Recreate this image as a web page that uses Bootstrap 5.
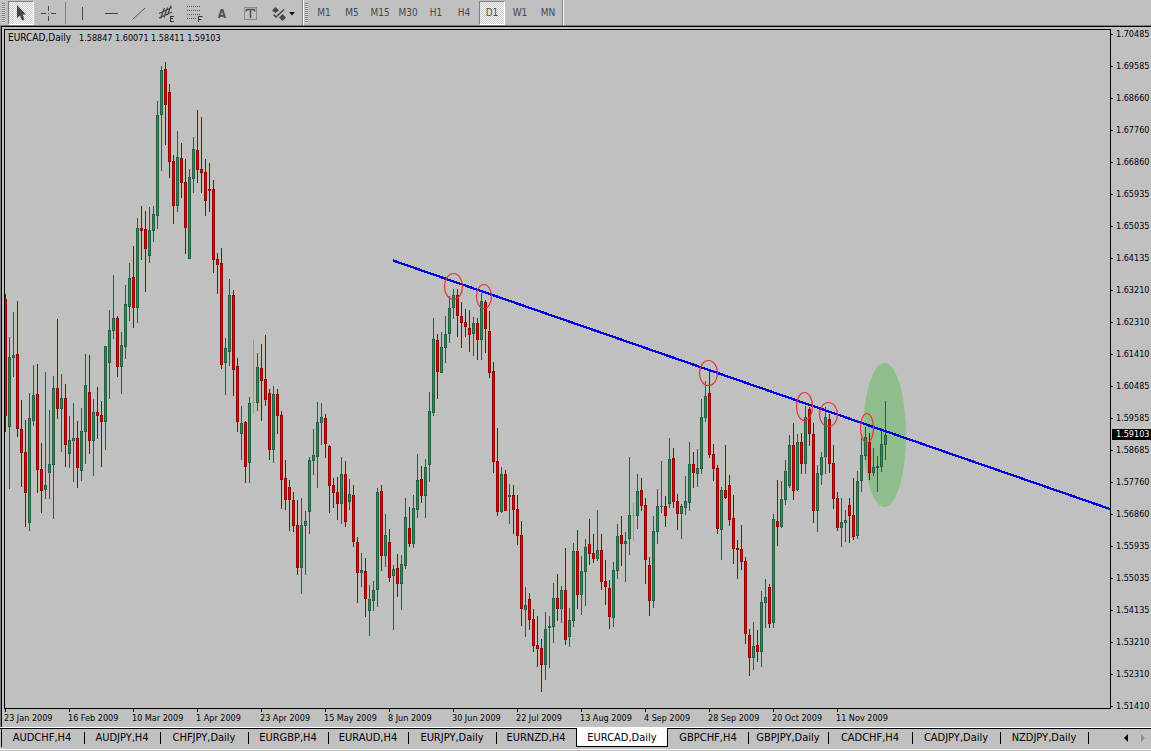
<!DOCTYPE html>
<html lang="en">
<head>
<meta charset="utf-8">
<meta name="viewport" content="width=device-width, initial-scale=1">
<title>EURCAD,Daily</title>
<link href="https://cdn.jsdelivr.net/npm/bootstrap@5.3.0/dist/css/bootstrap.min.css" rel="stylesheet">
<style>
  :root { --face: #c0c0c0; --shade: #808080; --ink: #000; }
  body {
    background: var(--face); color: var(--ink);
    font-family: "DejaVu Sans Condensed", "DejaVu Sans", sans-serif;
    font-size: 11px; line-height: 12px;
  }
  /* toolbar */
  .toolstrip { height: 26px; border-bottom: 1px solid var(--shade); }
  .toolgroup { height: 25px; border-right: 1px solid var(--shade); box-shadow: 1px 0 0 #fff; }
  .grip { width: 3px; height: 20px; margin: 0 2px; background: repeating-linear-gradient(#808080 0 1px, #d8d8d8 1px 2px); }
  .tool {
    --bs-btn-padding-x: 0; --bs-btn-padding-y: 0; --bs-btn-border-radius: 0;
    --bs-btn-color: #484848; --bs-btn-font-size: 10px; --bs-btn-line-height: 12px;
    width: 28px; height: 24px; border: 0;
  }
  .tool svg { display: block; margin: auto; }
  .tool-down {
    width: 26px; margin: 0 1px; border: 1px solid; border-color: #808080 #fff #fff #808080;
    background: repeating-conic-gradient(#fff 0 25%, #c8c8c8 0 50%) 0 0 / 2px 2px;
  }
  .tool-wide { width: 38px; }
  .rule { width: 1px; height: 22px; margin: 0 2px; background: var(--shade); }
  /* chart window */
  .chartwin {
    margin-left: 1px; padding: 2px 0 0 2px; min-height: 0;
    border-top: 1px solid var(--ink); border-left: 1px solid var(--ink);
    box-shadow: -1px 0 0 var(--shade);
    display: grid; grid-template: minmax(0, 1fr) 18px / minmax(0, 1fr) 40px;
  }
  .plot { border: 1px solid var(--ink); min-height: 0; }
  .plot svg { display: block; width: 100%; height: 100%; }
  .quote { top: 2px; left: 3px; font-size: 9px; gap: 8px; }
  .quote-name { font-size: 10px; }
  .prices { grid-column: 2; grid-row: 1 / 3; margin-top: -1px; padding-bottom: 15px; font-size: 9px; }
  .prices li { padding-left: 5px; }
  .prices li::before { content: ""; position: absolute; left: 0; top: 6px; width: 2px; height: 1px; background: var(--ink); }
  .prices .price-now { top: 57.4%; left: 1px; right: 0; padding-left: 4px; height: 11px; line-height: 11px; background: #000; color: #fff; }
  .dates { font-size: 9px; overflow: hidden; }
  .dates li { flex: 0 0 64px; padding-top: 3px; white-space: nowrap; }
  .dates li::before { content: ""; position: absolute; left: 1px; top: 0; width: 1px; height: 3px; background: var(--ink); }
  /* chart tabs */
  .tabstrip { height: 24px; border-top: 1px solid #fff; }
  .tabrow { height: 22px; border-top: 1px solid var(--ink); border-bottom: 1px solid #fff; }
  .tabrow::before { content: ""; width: 1px; height: 18px; margin: 0 -2px 0 1px; background: var(--ink); }
  .charttab { flex: 0 0 80px; height: 18px; color: #000; text-align: center; line-height: 18px; text-decoration: none; white-space: nowrap; position: relative; }
  .charttab::after { content: ""; position: absolute; right: -1px; top: 3px; width: 1px; height: 12px; background: var(--ink); }
  .t76 { flex-basis: 76px; }
  .t84 { flex-basis: 84px; }
  .t88 { flex-basis: 88px; }
  .t92 { flex-basis: 92px; }
  .before-open::after { display: none; }
  .open-tab { height: 19px; margin-top: -1px; background: #fff; border: 1px solid #000; border-top: 0; line-height: 20px; }
  .open-tab::after { display: none; }
  .scroller { border: 0; background: none; padding: 0; width: 17px; height: 18px; }
  .scroller svg { display: block; margin: auto; }
</style>
</head>
<body class="vh-100 d-flex flex-column overflow-hidden">
<header class="toolstrip d-flex flex-shrink-0" role="toolbar" aria-label="Chart tools">
  <div class="toolgroup d-flex align-items-center">
    <span class="grip"></span>
    <button class="btn tool tool-down" type="button" aria-label="Cursor"><svg width="16" height="18"><path d="M4 1V14L7 11.500L9 16.500L11.500 15.500L9.500 10.500H13Z" fill="#444"/></svg></button>
    <button class="btn tool" type="button" aria-label="Crosshair"><svg width="16" height="18" shape-rendering="crispEdges"><path d="M7 2v5h1V2zM7 12v5h1v-5zM0 9v1h5V9zM10 9v1h5V9zM7 9v1h1V9z" fill="#444"/></svg></button>
    <span class="rule"></span>
    <button class="btn tool" type="button" aria-label="Vertical line"><svg width="16" height="18" shape-rendering="crispEdges"><path d="M8 3h1v13h-1z" fill="#444"/></svg></button>
    <button class="btn tool" type="button" aria-label="Horizontal line"><svg width="16" height="18" shape-rendering="crispEdges"><path d="M3 9h13v1H3z" fill="#444"/></svg></button>
    <button class="btn tool" type="button" aria-label="Trendline"><svg width="16" height="18"><path d="M2.500 15.500L15 4" stroke="#555" fill="none"/></svg></button>
    <button class="btn tool" type="button" aria-label="Equidistant channel"><svg width="18" height="18"><path d="M2 9.500L15 3.500M2 14L15 8M3.500 14.500L7.500 4M7 13.500L10.500 3.500M10.500 11L14 1.500" stroke="#444" stroke-width="1.200" fill="none"/><path d="M13 12.500h4M13 14.500h3M13 17.500h4M13.500 12v6" stroke="#333" fill="none"/></svg></button>
    <button class="btn tool" type="button" aria-label="Fibonacci retracement"><svg width="18" height="18"><path d="M2 2.500h14M2 6.500h14M2 10.500h14M2 14.500h9" stroke="#555" stroke-dasharray="1 1" fill="none"/><path d="M13.500 18v-5.500h4M13.500 15.500h3" stroke="#333" fill="none"/></svg></button>
    <button class="btn tool fw-bold" type="button" aria-label="Text"><svg width="16" height="18"><text x="8" y="14" text-anchor="middle" font-size="12" fill="#505050">A</text></svg></button>
    <button class="btn tool" type="button" aria-label="Text label"><svg width="16" height="18"><rect x="2.500" y="3.500" width="12" height="12" fill="none" stroke="#555" stroke-dasharray="1 1"/><path d="M4.500 5.500h8v2M4.500 5v2.500M8.500 5v9" stroke="#505050" stroke-width="1.500" fill="none"/></svg></button>
    <button class="btn tool tool-wide" type="button" aria-label="Arrows"><svg width="26" height="18"><path d="M2 6.500L5.500 3L9 6.500L5.500 9ZM9 13.500L12.500 10L16 13.500L12.500 17Z" fill="#484848"/><path d="M3.500 10.500L6 13L14 5.500" stroke="#484848" stroke-width="1.500" fill="none"/><path d="M19 8h6l-3 3.500z" fill="#111"/></svg></button>
  </div>
  <div class="toolgroup d-flex align-items-center">
    <span class="grip"></span>
    <button class="btn tool" type="button">M1</button>
    <button class="btn tool" type="button">M5</button>
    <button class="btn tool" type="button">M15</button>
    <button class="btn tool" type="button">M30</button>
    <button class="btn tool" type="button">H1</button>
    <button class="btn tool" type="button">H4</button>
    <button class="btn tool tool-down" type="button" aria-pressed="true">D1</button>
    <button class="btn tool" type="button">W1</button>
    <button class="btn tool" type="button">MN</button>
  </div>
</header>

<main class="chartwin flex-grow-1">
  <div class="plot position-relative">
    <svg viewBox="5 30 1105 678" preserveAspectRatio="none" role="img" aria-label="EURCAD daily candlestick chart">
      <ellipse cx="884.500" cy="435" rx="21.500" ry="72" fill="#8fbe8c"/>
      <g id="candles" shape-rendering="crispEdges"></g>
      <path d="M393 260.500L1110 509" stroke="#0000e0" stroke-width="2.300" fill="none" shape-rendering="crispEdges"/>
      <g fill="none" stroke="#e83030" stroke-width="1.200">
        <ellipse cx="453.500" cy="286.500" rx="9" ry="13"/>
        <ellipse cx="484" cy="296.500" rx="7.500" ry="12"/>
        <ellipse cx="708.500" cy="373" rx="9" ry="12.500"/>
        <ellipse cx="804.500" cy="406.500" rx="8" ry="14"/>
        <ellipse cx="828.500" cy="414.500" rx="9" ry="12"/>
        <ellipse cx="867" cy="428" rx="6.500" ry="14.500"/>
      </g>
    </svg>
    <div class="quote position-absolute d-flex"><span class="quote-name">EURCAD,Daily</span><span>1.58847 1.60071 1.58411 1.59103</span></div>
  </div>
  <ul class="prices list-unstyled mb-0 position-relative d-flex flex-column justify-content-between">
    <li class="position-relative">1.70485</li><li class="position-relative">1.69585</li><li class="position-relative">1.68660</li><li class="position-relative">1.67760</li>
    <li class="position-relative">1.66860</li><li class="position-relative">1.65935</li><li class="position-relative">1.65035</li><li class="position-relative">1.64135</li>
    <li class="position-relative">1.63210</li><li class="position-relative">1.62310</li><li class="position-relative">1.61410</li><li class="position-relative">1.60485</li>
    <li class="position-relative">1.59585</li><li class="position-relative">1.58685</li><li class="position-relative">1.57760</li><li class="position-relative">1.56860</li>
    <li class="position-relative">1.55935</li><li class="position-relative">1.55035</li><li class="position-relative">1.54135</li><li class="position-relative">1.53210</li>
    <li class="position-relative">1.52310</li><li class="position-relative">1.51410</li>
    <li class="price-now position-absolute">1.59103</li>
  </ul>
  <ul class="dates list-unstyled mb-0 d-flex">
    <li class="position-relative">23 Jan 2009</li><li class="position-relative">16 Feb 2009</li><li class="position-relative">10 Mar 2009</li><li class="position-relative">1 Apr 2009</li>
    <li class="position-relative">23 Apr 2009</li><li class="position-relative">15 May 2009</li><li class="position-relative">8 Jun 2009</li><li class="position-relative">30 Jun 2009</li>
    <li class="position-relative">22 Jul 2009</li><li class="position-relative">13 Aug 2009</li><li class="position-relative">4 Sep 2009</li><li class="position-relative">28 Sep 2009</li>
    <li class="position-relative">20 Oct 2009</li><li class="position-relative">11 Nov 2009</li>
  </ul>
</main>

<footer class="tabstrip flex-shrink-0">
  <nav class="tabrow d-flex" aria-label="Charts">
    <a class="charttab t84" href="#">AUDCHF,H4</a>
    <a class="charttab t76" href="#">AUDJPY,H4</a>
    <a class="charttab t88" href="#">CHFJPY,Daily</a>
    <a class="charttab" href="#">EURGBP,H4</a>
    <a class="charttab" href="#">EURAUD,H4</a>
    <a class="charttab t88" href="#">EURJPY,Daily</a>
    <a class="charttab before-open" href="#">EURNZD,H4</a>
    <a class="charttab open-tab t92" href="#" aria-current="page">EURCAD,Daily</a>
    <a class="charttab" href="#">GBPCHF,H4</a>
    <a class="charttab" href="#">GBPJPY,Daily</a>
    <a class="charttab t84" href="#">CADCHF,H4</a>
    <a class="charttab t88" href="#">CADJPY,Daily</a>
    <a class="charttab t88" href="#">NZDJPY,Daily</a>
    <span class="ms-auto d-flex">
      <button class="scroller" type="button" aria-label="Scroll tabs left"><svg width="6" height="8"><path d="M5 0v8L1 4z" fill="#000"/></svg></button>
      <button class="scroller" type="button" aria-label="Scroll tabs right"><svg width="6" height="8"><path d="M1 0v8l4-4z" fill="#909090"/></svg></button>
    </span>
  </nav>
</footer>

<script src="https://cdn.jsdelivr.net/npm/bootstrap@5.3.0/dist/js/bootstrap.bundle.min.js"></script>
<script>
  // One bar per day: direction (r falling, g rising, l unchanged), then high, body top, body bottom, low.
  const bars = `r294 299 416 432,g337 357 427 489,g312 355 358 377,r301 354 429 437,r400 429 453 487,r420 452 493 527,g393 418 523 531,g365 395 421 426,r364 394 470 493,r443 469 491 513,
g372 485 490 499,g410 464 473 499,g376 388 465 519,r319 388 409 419,g374 398 409 452,r384 398 445 467,g416 440 454 468,g403 438 441 482,r421 438 468 488,g408 431 471 481,
g354 385 432 464,r355 392 441 454,g399 412 441 476,r387 412 416 439,r401 415 422 467,g346 346 422 450,g310 330 363 399,g275 318 331 339,r316 318 367 377,g332 345 367 394,
g285 304 347 359,g263 278 307 321,r246 277 308 328,g218 228 308 323,r206 228 231 260,r211 229 249 292,g207 230 256 263,g206 214 231 242,g101 115 216 229,g66 70 115 171,
r62 69 105 145,r84 92 162 178,r155 161 206 224,g131 157 206 212,r143 158 183 198,r159 182 228 254,g169 177 259 259,g137 149 179 193,r110 150 170 183,r117 169 173 193,
r159 172 201 216,r163 189 191 212,r180 189 260 273,r253 259 265 294,r248 263 365 369,g338 348 363 395,g279 295 352 366,r290 295 370 396,r358 366 422 432,g406 423 434 460,
r421 422 467 483,g397 403 463 483,l340 402 403 414,g353 367 403 411,r344 368 381 421,r335 379 400 406,r389 393 450 460,g386 394 450 463,r389 394 416 434,r411 415 480 509,
r460 478 500 510,r480 487 500 531,r492 500 526 532,r500 525 568 575,g498 525 568 594,g511 521 526 575,g457 460 512 534,g429 455 461 475,g402 422 457 488,g403 417 423 445,
r414 418 444 458,r445 446 486 513,r478 485 493 508,r477 492 504 520,g457 474 504 524,r461 474 522 527,g479 494 502 510,r485 495 542 547,r537 542 573 603,g553 570 573 587,
r558 571 599 617,g585 599 611 636,g581 590 601 611,g488 492 590 607,r485 491 556 571,g514 535 556 567,r529 542 578 582,g565 569 576 630,r554 568 584 597,g555 564 584 610,
g498 517 566 569,r507 528 544 547,g495 508 544 548,g454 480 510 518,r466 479 496 503,g459 467 496 518,g392 411 465 482,g318 339 413 416,r334 340 372 399,g332 347 373 373,
g316 334 348 363,g296 308 334 343,g289 295 308 319,r289 295 316 337,r302 316 323 348,r309 322 327 337,r310 328 335 352,g317 323 334 356,r318 323 340 360,g293 301 340 360,
r300 302 329 353,r311 331 373 378,r362 371 462 473,r428 461 512 516,g467 474 512 513,r470 474 511 511,g484 495 497 524,r485 495 510 534,r495 509 536 545,r521 535 609 626,
g587 605 610 637,r593 599 620 630,r609 619 646 652,r616 645 649 667,r639 648 665 692,g612 629 665 680,g616 626 628 668,g583 598 627 643,r574 598 609 621,g586 590 609 623,
r548 590 640 645,g608 620 637 647,g543 551 621 627,r530 551 595 609,g556 571 595 615,g539 547 572 606,r519 544 554 565,r534 553 559 563,g510 550 559 561,r534 550 582 590,
r560 581 587 605,r580 588 617 629,g562 570 618 627,g524 536 571 579,r516 535 544 566,g532 541 544 582,g457 515 539 555,l503 515 516 541,g474 491 516 529,r478 490 506 511,
r498 505 560 584,r557 565 601 616,g516 531 601 608,g489 506 532 544,g461 506 507 513,r496 506 516 527,g438 459 504 508,r448 458 502 508,r494 501 514 530,g504 506 514 539,
g476 501 508 515,g442 464 503 511,r452 464 473 488,g449 468 474 487,g399 417 469 474,g381 396 418 422,r371 393 455 458,r444 454 469 481,r465 468 529 534,g487 490 530 560,
r445 490 498 499,r475 485 520 526,r495 518 549 564,r540 548 550 579,r525 549 562 570,r557 561 634 644,r629 635 658 676,g622 646 658 670,r630 645 652 662,g591 602 652 667,
g579 597 603 628,r584 587 624 628,g514 519 623 628,r480 521 527 546,g481 499 527 528,g460 471 500 505,g435 445 486 488,r423 445 491 500,g434 442 490 491,r433 442 464 474,
g406 417 464 474,r407 409 434 446,r423 434 511 523,g465 473 511 532,g452 457 475 485,g407 417 457 474,r414 419 464 473,r445 463 499 509,r492 498 528 531,g498 522 528 547,
g510 520 523 542,r498 505 516 543,r478 515 537 540,g471 481 536 539,g438 455 481 492,g427 437 456 460,r433 442 473 480,g448 467 473 476,g456 466 468 492,g428 444 467 472,g401 435 445 460`;
  // wick, body edge, body core
  const colours = {
    r: ['#880808', '#980000', '#f00000'],
    g: ['#2c5850', '#246040', '#308c58'],
    l: ['#20f020', '#40e040', '#40e040']
  };
  const rect = (x, y, w, h, fill) => `<rect x="${x}" y="${y}" width="${w}" height="${h}" fill="${fill}"/>`;
  document.getElementById('candles').innerHTML = bars.split(',').map((bar, i) => {
    bar = bar.trim();
    const [wick, edge, core] = colours[bar[0]];
    const [high, top, bottom, low] = bar.slice(1).split(' ').map(Number);
    const x = 5 + 4 * i;
    return rect(x, high, 1, low - high, wick)
      + rect(x - 1, top, 3, bottom - top, edge)
      + (bottom - top > 2 ? rect(x, top + 1, 1, bottom - top - 2, core) : '');
  }).join('');
</script>
</body>
</html>
